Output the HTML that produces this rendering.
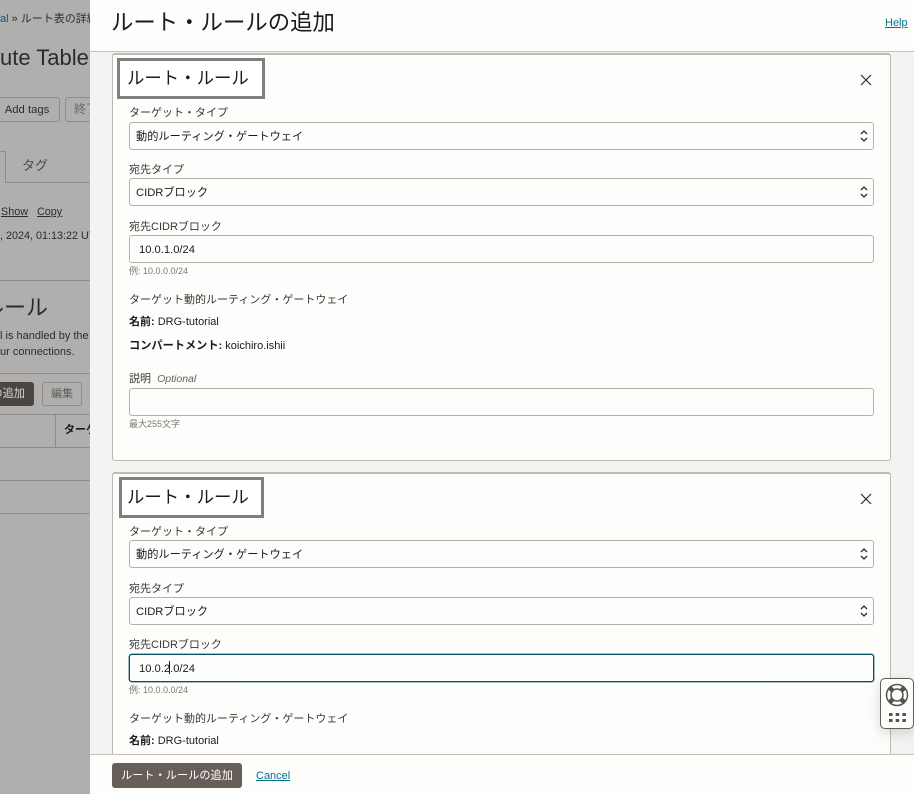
<!DOCTYPE html>
<html lang="ja"><head><meta charset="utf-8"><title>ルート・ルールの追加</title>
<style>
html,body{margin:0;padding:0;overflow:hidden;width:914px;height:794px}
body{position:relative;background:#b0afad;font-family:"Liberation Sans","Noto Sans CJK JP",sans-serif;color:#1d1b19;font-size:12px}
.a{position:absolute;white-space:nowrap}
.l{color:#3a3835;font-size:11px;line-height:16px}
.box{position:absolute;left:129px;width:743px;background:#fdfdfb;border:1px solid #b5b1ab;border-radius:3px;box-sizing:content-box}
.s{font-size:11.2px;line-height:28px;padding-left:6px;width:737px;color:#1d1b19;height:26px}
.h{color:#7a7672;font-size:9px;line-height:12px}
.card{position:absolute;left:112px;width:777px;background:#fdfdfb;border:1px solid #bdb9b3;border-top-width:2px;border-radius:3px}
.t{position:absolute;left:117px;width:142px;height:35px;border:3px solid #7f7f7f;background:#fff;font-size:17.4px;line-height:34px;text-indent:7px;color:#1d1b19}
.g{color:#2e2c2a}
.bk{color:#1d1b19;font-size:11px;line-height:16px}
.sep{position:absolute;height:1px;background:#8e8c8a;left:0;width:90px}
</style></head><body>
<div class="a g" style="left:0;top:11px;font-size:11px;line-height:16px;width:90px;overflow:hidden"><span style="color:#0a5a73">al</span> » ルート表の詳細</div>
<div class="a g" style="left:0;top:44px;font-size:22px;line-height:28px;width:90px;overflow:hidden">ute Table</div>
<div class="a" style="left:-6px;top:97px;width:64px;height:23px;border:1px solid #8e8c8a;border-radius:3px;font-size:11.3px;line-height:24px;text-align:center;color:#2e2c2a">Add tags</div>
<div class="a" style="left:65px;top:97px;width:40px;height:23px;border:1px solid #8e8c8a;border-radius:3px;font-size:12px;line-height:23px;padding-left:8px;color:#6b6966;box-sizing:content-box">終了</div>
<div class="a" style="left:-10px;top:151px;width:14px;height:31px;border:1px solid #8e8c8a;border-bottom:0"></div>
<div class="a" style="left:22px;top:156px;font-size:13px;line-height:20px;color:#4a4846">タグ</div>
<div class="sep" style="left:5px;width:85px;top:182px"></div>
<div class="a" style="left:1px;top:205px;font-size:10.8px;line-height:14px;color:#2e2c2a;text-decoration:underline">Show</div>
<div class="a" style="left:37px;top:205px;font-size:10.8px;line-height:14px;color:#2e2c2a;text-decoration:underline">Copy</div>
<div class="a g" style="left:0;top:229px;font-size:10.8px;line-height:14px;width:90px;overflow:hidden">, 2024, 01:13:22 UTC</div>
<div class="sep" style="top:280px"></div>
<div class="a g" style="left:-18px;top:293px;font-size:22px;line-height:30px;width:108px;overflow:hidden">ルール</div>
<div class="a g" style="left:0;top:328px;font-size:11px;line-height:16px;width:90px;overflow:hidden">l is handled by the</div>
<div class="a g" style="left:0;top:344px;font-size:11px;line-height:16px;width:90px;overflow:hidden">ur connections.</div>
<div class="sep" style="top:373px"></div>
<div class="a" style="left:-10px;top:382px;width:44px;height:24px;background:#4c4642;border-radius:3px;color:#d5d3d0;font-size:11.2px;line-height:24px;overflow:hidden"><span style="position:absolute;right:9px;top:0">の追加</span></div>
<div class="a" style="left:42px;top:382px;width:38px;height:22px;border:1px solid #8e8c8a;border-radius:3px;color:#5f5d5a;font-size:11px;line-height:23px;text-align:center">編集</div>
<div class="sep" style="top:414px"></div>
<div class="a" style="left:55px;top:414px;width:1px;height:33px;background:#8e8c8a"></div>
<div class="a" style="left:64px;top:422px;font-size:11px;line-height:16px;font-weight:bold;width:26px;overflow:hidden;color:#1d1b19">ターゲット</div>
<div class="sep" style="top:447px"></div>
<div class="sep" style="top:480px"></div>
<div class="sep" style="top:513px"></div>

<div class="a" style="left:90px;top:0;width:824px;height:794px;background:#f4f3f1"></div>
<div class="a" style="left:90px;top:0;width:824px;height:51px;background:#fdfdfb;border-bottom:1px solid #c4c1bc"></div>
<div class="a" style="left:111px;top:7px;font-size:22.4px;line-height:32px;color:#1d1b19">ルート・ルールの追加</div>
<div class="a" style="left:885px;top:16px;font-size:11px;line-height:14px;color:#04718f;text-decoration:underline">Help</div>

<div class="card" style="top:53px;height:405px"></div>
<div class="t" style="top:58px">ルート・ルール</div>
<svg class="a" style="left:860px;top:74px" width="12" height="12" viewBox="0 0 12 12"><path d="M1 1L11 11M11 1L1 11" stroke="#2e2c2a" stroke-width="1.2" fill="none"/></svg>
<div class="a l" style="left:129px;top:105px">ターゲット・タイプ</div>
<div class="box s" style="top:122px">動的ルーティング・ゲートウェイ</div>
<svg class="a" style="left:860px;top:129px" width="8" height="14" viewBox="0 0 8 14"><path d="M1 5L4 2L7 5M1 9L4 12L7 9" stroke="#2e2c2a" stroke-width="1.3" fill="none"/></svg>
<div class="a l" style="left:129px;top:162px">宛先タイプ</div>
<div class="box s" style="top:178px">CIDRブロック</div>
<svg class="a" style="left:860px;top:185px" width="8" height="14" viewBox="0 0 8 14"><path d="M1 5L4 2L7 5M1 9L4 12L7 9" stroke="#2e2c2a" stroke-width="1.3" fill="none"/></svg>
<div class="a l" style="left:129px;top:219px">宛先CIDRブロック</div>
<div class="box s" style="top:235px;padding-left:9px;width:734px">10.0.1.0/24</div>
<div class="a h" style="left:129px;top:265px">例: 10.0.0.0/24</div>
<div class="a l" style="left:129px;top:292px">ターゲット動的ルーティング・ゲートウェイ</div>
<div class="a bk" style="left:129px;top:314px"><b>名前:</b> DRG-tutorial</div>
<div class="a bk" style="left:129px;top:338px"><b style="font-size:11.2px">コンパートメント:</b> koichiro.ishii</div>
<div class="a l" style="left:129px;top:371px">説明&nbsp; <i style="font-size:10.5px;color:#66625e">Optional</i></div>
<div class="box" style="top:388px;height:26px"></div>
<div class="a h" style="left:129px;top:418px">最大255文字</div>

<div class="card" style="top:472px;height:300px"></div>
<div class="t" style="top:477px;left:119px;width:139px;text-indent:5px">ルート・ルール</div>
<svg class="a" style="left:860px;top:493px" width="12" height="12" viewBox="0 0 12 12"><path d="M1 1L11 11M11 1L1 11" stroke="#2e2c2a" stroke-width="1.2" fill="none"/></svg>
<div class="a l" style="left:129px;top:524px">ターゲット・タイプ</div>
<div class="box s" style="top:540px">動的ルーティング・ゲートウェイ</div>
<svg class="a" style="left:860px;top:547px" width="8" height="14" viewBox="0 0 8 14"><path d="M1 5L4 2L7 5M1 9L4 12L7 9" stroke="#2e2c2a" stroke-width="1.3" fill="none"/></svg>
<div class="a l" style="left:129px;top:581px">宛先タイプ</div>
<div class="box s" style="top:597px">CIDRブロック</div>
<svg class="a" style="left:860px;top:604px" width="8" height="14" viewBox="0 0 8 14"><path d="M1 5L4 2L7 5M1 9L4 12L7 9" stroke="#2e2c2a" stroke-width="1.3" fill="none"/></svg>
<div class="a l" style="left:129px;top:637px">宛先CIDRブロック</div>
<div class="box s" style="top:654px;padding-left:9px;width:734px;border-color:#0f5265;box-shadow:0 0 0 .4px #0f5265">10.0.2.0/24</div>
<div class="a" style="left:169px;top:661px;width:1px;height:13px;background:#1d1b19"></div>
<div class="a h" style="left:129px;top:684px">例: 10.0.0.0/24</div>
<div class="a l" style="left:129px;top:711px">ターゲット動的ルーティング・ゲートウェイ</div>
<div class="a bk" style="left:129px;top:733px"><b>名前:</b> DRG-tutorial</div>

<div class="a" style="left:90px;top:754px;width:824px;height:40px;background:#fdfdfb;border-top:1px solid #c4c1bc;box-sizing:border-box"></div>
<div class="a" style="left:112px;top:763px;width:130px;height:25px;background:#665e59;border-radius:3px;color:#fff;font-size:11.2px;line-height:27px;text-align:center">ルート・ルールの追加</div>
<div class="a" style="left:256px;top:769px;font-size:11px;line-height:14px;color:#04718f;text-decoration:underline">Cancel</div>

<div class="a" style="left:880px;top:678px;width:32px;height:49px;background:#fdfdfb;border:1px solid #5f5d5a;border-radius:5px;box-shadow:0 4px 12px rgba(0,0,0,.15)">
<svg style="position:absolute;left:4px;top:4px" width="24" height="24" viewBox="0 0 24 24"><circle cx="12" cy="12" r="10.5" fill="none" stroke="#55524f" stroke-width="1.5"/><circle cx="12" cy="12" r="6" fill="none" stroke="#55524f" stroke-width="1.5"/><path d="M4.8 4.8L8 8M19.2 4.8L16 8M4.8 19.2L8 16M19.2 19.2L16 16" stroke="#55524f" stroke-width="4.5"/></svg>
<svg style="position:absolute;left:8px;top:34px" width="17" height="10" viewBox="0 0 17 10"><g fill="#55524f"><rect x="0" y="0" width="3.5" height="3"/><rect x="6.7" y="0" width="3.5" height="3"/><rect x="13.4" y="0" width="3.5" height="3"/><rect x="0" y="6" width="3.5" height="3"/><rect x="6.7" y="6" width="3.5" height="3"/><rect x="13.4" y="6" width="3.5" height="3"/></g></svg>
</div>
</body></html>
